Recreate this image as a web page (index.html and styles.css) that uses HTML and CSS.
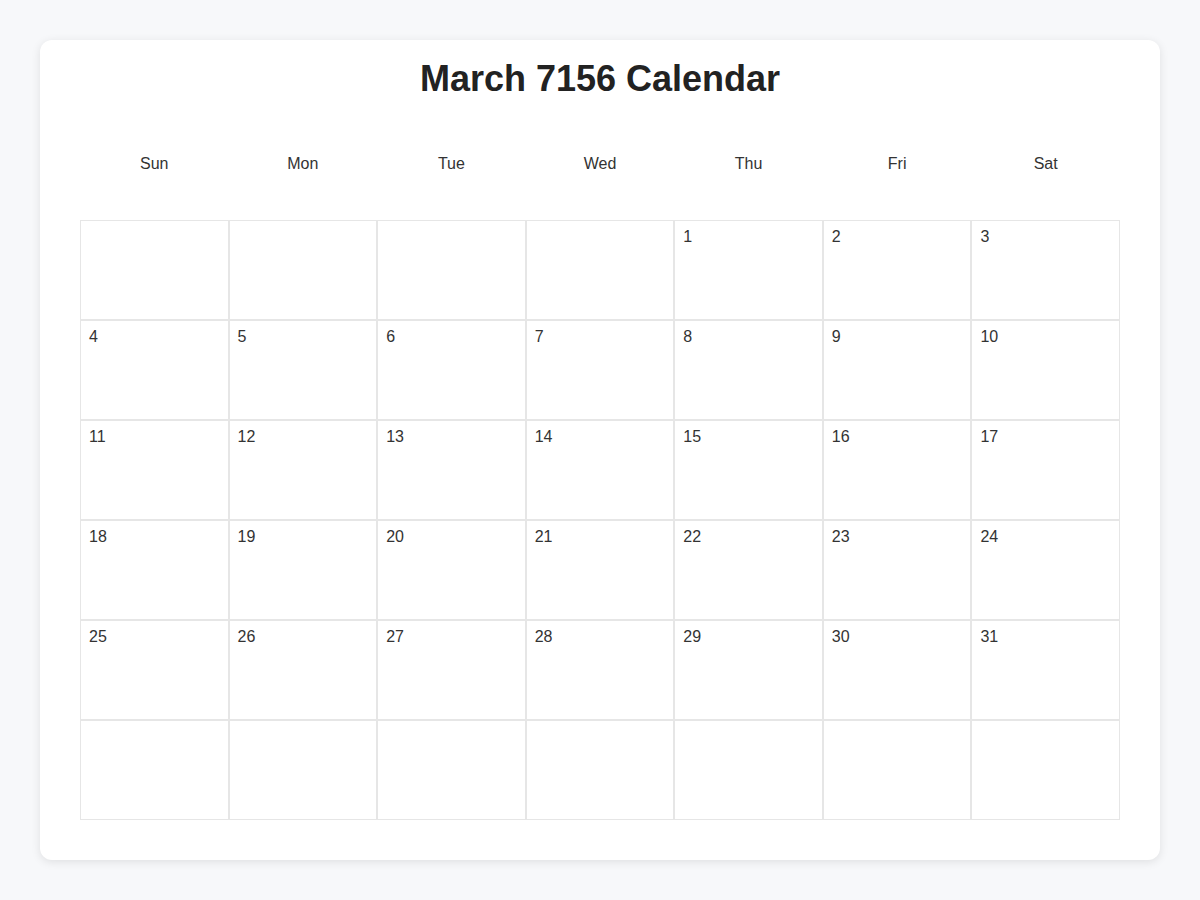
FILE: index.html
```html
<!DOCTYPE html>
<html lang="en">
<head>
<meta charset="utf-8">
<title>March 7156 Calendar</title>
<link rel="stylesheet" href="styles.css">
</head>
<body>
<div class="card">
  <h1 class="title">March 7156 Calendar</h1>
  <div class="weekdays">
    <div class="wd">Sun</div><div class="wd">Mon</div><div class="wd">Tue</div><div class="wd">Wed</div><div class="wd">Thu</div><div class="wd">Fri</div><div class="wd">Sat</div>
  </div>
  <div class="grid">
    <div class="cell"></div><div class="cell"></div><div class="cell"></div><div class="cell"></div><div class="cell">1</div><div class="cell">2</div><div class="cell">3</div>
    <div class="cell">4</div><div class="cell">5</div><div class="cell">6</div><div class="cell">7</div><div class="cell">8</div><div class="cell">9</div><div class="cell">10</div>
    <div class="cell">11</div><div class="cell">12</div><div class="cell">13</div><div class="cell">14</div><div class="cell">15</div><div class="cell">16</div><div class="cell">17</div>
    <div class="cell">18</div><div class="cell">19</div><div class="cell">20</div><div class="cell">21</div><div class="cell">22</div><div class="cell">23</div><div class="cell">24</div>
    <div class="cell">25</div><div class="cell">26</div><div class="cell">27</div><div class="cell">28</div><div class="cell">29</div><div class="cell">30</div><div class="cell">31</div>
    <div class="cell"></div><div class="cell"></div><div class="cell"></div><div class="cell"></div><div class="cell"></div><div class="cell"></div><div class="cell"></div>
  </div>
</div>
</body>
</html>
```
FILE: styles.css
```css
html, body {
  margin: 0;
  padding: 0;
}
body {
  background: #f7f8fa;
  font-family: "Liberation Sans", Arial, sans-serif;
  color: #333;
  padding: 40px;
}
.card {
  background: #fff;
  border-radius: 12px;
  box-shadow: 0 2px 10px rgba(0, 0, 0, 0.1);
  padding: 18px 40px 40px;
}
.title {
  margin: 0;
  text-align: center;
  font-size: 36px;
  line-height: 41px;
  font-weight: 700;
  color: #222;
}
.weekdays {
  display: grid;
  grid-template-columns: repeat(7, 1fr);
  margin-top: 47px;
  margin-bottom: 38px;
}
.wd {
  text-align: center;
  font-size: 16px;
  line-height: 36px;
  color: #333;
}
.grid {
  display: grid;
  grid-template-columns: repeat(7, 1fr);
}
.cell {
  height: 100px;
  box-sizing: border-box;
  border: 1px solid #e6e6e6;
  padding: 7px 8px;
  font-size: 16px;
  line-height: 18px;
  color: #333;
}
```
